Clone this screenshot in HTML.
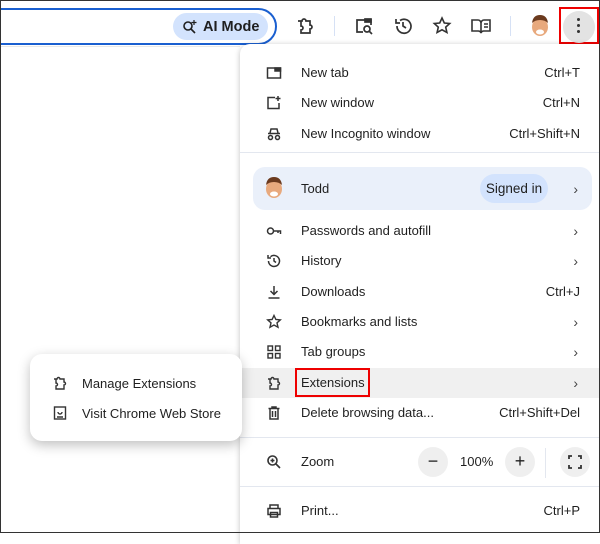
<!DOCTYPE html><html><head><style>
*{margin:0;padding:0;box-sizing:border-box}
body{width:600px;height:533px;overflow:hidden;background:#fff;font-family:"Liberation Sans",sans-serif;color:#1f1f1f;position:relative;font-size:13px}
.frame{position:absolute;inset:0;border:1px solid #333;z-index:50;pointer-events:none}
.omni{position:absolute;left:-20px;top:8px;width:297px;height:37px;border:2px solid #1a5fd0;border-radius:20px}
.ai{position:absolute;left:173px;top:13px;width:95px;height:27px;background:#d3e3fd;border-radius:14px;font-size:14.5px;font-weight:bold;color:#1f1f1f;padding:6px 0 0 30px}
.tb{position:absolute;top:46px;left:0;width:240px;height:1px;background:#e8e8e8}
.menu{position:absolute;left:240px;top:44px;width:360px;height:500px;background:#fff;border-radius:10px 0 0 0;box-shadow:0 1px 6px rgba(0,0,0,.25)}
.row{position:absolute;left:0;width:360px;height:30px;line-height:30px}
.row .t{position:absolute;left:61px}
.row .s{position:absolute;right:20px}
.row .ch{position:absolute;right:22px;font-size:14px;color:#444}
.ic{position:absolute;left:26px;top:7px;width:16px;height:16px}
.sep{position:absolute;left:0;width:360px;height:1px;background:#e3e7ef}
.sub{position:absolute;left:30px;top:354px;width:212px;height:87px;background:#fff;border-radius:12px;box-shadow:0 4px 12px rgba(0,0,0,.25);z-index:5}
.sub div{position:absolute;left:52px;font-size:13px}
.btn{position:absolute;width:30px;height:30px;border-radius:15px;background:#efefef;text-align:center;line-height:29px;font-size:18px}
</style></head><body>
<div class="frame"></div>
<div class="omni"></div>
<div class="ai"><svg style="position:absolute;left:9px;top:6px" width="16" height="16" viewBox="0 0 16 16" fill="none" stroke="#1f1f1f" stroke-width="1.6"><circle cx="6" cy="7" r="4"/><path d="M9 10l4 4"/><path d="M12 1v5M9.5 3.5h5" stroke-width="1.2"/></svg>AI Mode</div>
<svg style="position:absolute;left:295px;top:16px" width="20" height="20" viewBox="0 0 20 20" fill="none" stroke="#333" stroke-width="1.7"><path d="M3 5h4a2 2 0 014 0h4v4a2 2 0 010 4v4H6v-3a2 2 0 000-4V5"/></svg>
<div style="position:absolute;left:334px;top:16px;width:1px;height:20px;background:#d6e1f5"></div>
<svg style="position:absolute;left:354px;top:16px" width="20" height="20" viewBox="0 0 20 20" fill="none" stroke="#333" stroke-width="1.7"><path d="M9 16H3V4h14v5"/><rect x="11" y="3" width="6" height="3" fill="#333"/><circle cx="13" cy="13" r="3"/><path d="M15 15l3 3"/></svg>
<svg style="position:absolute;left:393px;top:16px" width="20" height="20" viewBox="0 0 20 20" fill="none" stroke="#333" stroke-width="1.7"><path d="M4 10a7 7 0 103-5.5M3 3v4h4"/><path d="M10 6v4l3 2"/></svg>
<svg style="position:absolute;left:432px;top:16px" width="20" height="20" viewBox="0 0 20 20" fill="none" stroke="#333" stroke-width="1.6"><path d="M10 2l2.3 5 5.4.5-4 3.7 1.2 5.3L10 13.8 5.1 16.5l1.2-5.3-4-3.7 5.4-.5z"/></svg>
<svg style="position:absolute;left:470px;top:16px" width="22" height="20" viewBox="0 0 22 20" fill="none" stroke="#333" stroke-width="1.6"><path d="M2 4h6a3 3 0 013 3v10a3 3 0 00-3-2H2zM20 4h-6a3 3 0 00-3 3v10a3 3 0 013-2h6z"/><path d="M14 8h4M14 11h4"/></svg>
<div style="position:absolute;left:510px;top:16px;width:1px;height:20px;background:#d6e1f5"></div>
<svg style="position:absolute;left:529px;top:14px" width="22" height="24" viewBox="0 0 22 24"><ellipse cx="11" cy="13" rx="8" ry="9" fill="#e8a97d"/><path d="M3 9q1-8 8-8t8 8q-3-3-8-3t-8 3z" fill="#6b3a1e"/><ellipse cx="11" cy="18" rx="4" ry="2.5" fill="#fff"/></svg>
<div style="position:absolute;left:559px;top:7px;width:40px;height:37px;border:2px solid #e00;"></div>
<div style="position:absolute;left:563px;top:11px;width:32px;height:32px;border-radius:16px;background:#e3e3e3"></div>
<div style="position:absolute;left:577px;top:18px;width:3px;height:3px;border-radius:2px;background:#333;box-shadow:0 6px 0 #333,0 12px 0 #333"></div>
<div class="tb"></div>

<div class="menu">
<div class="row" style="top:14px"><svg class="ic" viewBox="0 0 16 16" fill="none" stroke="#333" stroke-width="1.5"><rect x="1.5" y="3" width="13" height="10"/><rect x="9" y="3" width="5.5" height="3" fill="#333"/></svg><span class="t">New tab</span><span class="s">Ctrl+T</span></div>
<div class="row" style="top:44px"><svg class="ic" viewBox="0 0 16 16" fill="none" stroke="#333" stroke-width="1.5"><path d="M9 2.5H2v11h11V8M12 1v5M9.5 3.5h5"/></svg><span class="t">New window</span><span class="s">Ctrl+N</span></div>
<div class="row" style="top:75px"><svg class="ic" viewBox="0 0 16 16" fill="none" stroke="#333" stroke-width="1.5"><path d="M4 7l1-4h6l1 4M2 7.5h12"/><circle cx="4.5" cy="11.5" r="2"/><circle cx="11.5" cy="11.5" r="2"/></svg><span class="t">New Incognito window</span><span class="s">Ctrl+Shift+N</span></div>
<div class="sep" style="top:108px"></div>
<div style="position:absolute;left:13px;top:123px;width:339px;height:43px;background:#eaf0fa;border-radius:12px"></div>
<svg style="position:absolute;left:23px;top:132px" width="22" height="24" viewBox="0 0 22 24"><ellipse cx="11" cy="13" rx="8" ry="9" fill="#e8a97d"/><path d="M3 9q1-8 8-8t8 8q-3-3-8-3t-8 3z" fill="#6b3a1e"/><ellipse cx="11" cy="18" rx="4" ry="2.5" fill="#fff"/></svg>
<div class="row" style="top:130px"><span class="t">Todd</span><span class="ch">›</span></div>
<div style="position:absolute;left:240px;top:130px;width:68px;height:29px;border-radius:15px;background:#d3e3fd;line-height:29px;text-align:center;font-size:13.5px">Signed in</div>
<div class="row" style="top:172px"><svg class="ic" viewBox="0 0 16 16" fill="none" stroke="#333" stroke-width="1.5"><circle cx="4.5" cy="8" r="3"/><path d="M7.5 8h7v3M12 8v2"/></svg><span class="t">Passwords and autofill</span><span class="ch">›</span></div>
<div class="row" style="top:202px"><svg class="ic" viewBox="0 0 16 16" fill="none" stroke="#333" stroke-width="1.5"><path d="M2.5 8a5.5 5.5 0 102-4.3M2 2v3h3M8 5v3l2 1.5"/></svg><span class="t">History</span><span class="ch">›</span></div>
<div class="row" style="top:233px"><svg class="ic" viewBox="0 0 16 16" fill="none" stroke="#333" stroke-width="1.5"><path d="M8 2v8M4.5 7L8 10.5 11.5 7M2.5 14h11"/></svg><span class="t">Downloads</span><span class="s">Ctrl+J</span></div>
<div class="row" style="top:263px"><svg class="ic" viewBox="0 0 16 16" fill="none" stroke="#333" stroke-width="1.4"><path d="M8 1.5l1.9 4 4.4.4-3.3 3 1 4.3L8 11 4 13.2l1-4.3-3.3-3 4.4-.4z"/></svg><span class="t">Bookmarks and lists</span><span class="ch">›</span></div>
<div class="row" style="top:293px"><svg class="ic" viewBox="0 0 16 16" fill="none" stroke="#333" stroke-width="1.4"><rect x="2" y="2" width="4.5" height="4.5"/><rect x="9.5" y="2" width="4.5" height="4.5"/><rect x="2" y="9.5" width="4.5" height="4.5"/><rect x="9.5" y="9.5" width="4.5" height="4.5"/></svg><span class="t">Tab groups</span><span class="ch">›</span></div>
<div class="row" style="top:324px;background:#f0f0f0"><svg class="ic" viewBox="0 0 16 16" fill="none" stroke="#333" stroke-width="1.4"><path d="M2 4h3a1.5 1.5 0 013 0h4v3a1.5 1.5 0 010 3v4H4v-3a1.5 1.5 0 000-3V4"/></svg><span class="t">Extensions</span><span class="ch">›</span></div>
<div style="position:absolute;left:55px;top:324px;width:75px;height:29px;border:2px solid #e00"></div>
<div class="row" style="top:354px"><svg class="ic" viewBox="0 0 16 16" fill="none" stroke="#333" stroke-width="1.5"><path d="M2.5 3.5h11M6 3.5V2h4v1.5M4 3.5v10.5h8V3.5M6.5 6v6M9.5 6v6"/></svg><span class="t">Delete browsing data...</span><span class="s">Ctrl+Shift+Del</span></div>
<div class="sep" style="top:393px"></div>
<div class="row" style="top:403px;height:30px"><svg class="ic" viewBox="0 0 16 16" fill="none" stroke="#333" stroke-width="1.6"><circle cx="6.5" cy="6.5" r="4.5"/><path d="M10 10l4 4M6.5 4.5v4M4.5 6.5h4"/></svg><span class="t">Zoom</span></div>
<div class="btn" style="left:178px;top:403px">−</div>
<div style="position:absolute;left:220px;top:410px;font-size:13px">100%</div>
<div class="btn" style="left:265px;top:403px">+</div>
<div style="position:absolute;left:305px;top:404px;width:1px;height:30px;background:#e3e7ef"></div>
<div class="btn" style="left:320px;top:403px"><svg width="14" height="14" viewBox="0 0 14 14" fill="none" stroke="#333" stroke-width="1.8" style="margin-top:8px"><path d="M1 4V1h3M10 1h3v3M13 10v3h-3M4 13H1v-3"/></svg></div>
<div class="sep" style="top:442px"></div>
<div class="row" style="top:452px"><svg class="ic" viewBox="0 0 16 16" fill="none" stroke="#333" stroke-width="1.5"><path d="M4 5V2h8v3M2 5.5h12v6H2zM4.5 9.5h7v4.5h-7z"/></svg><span class="t">Print...</span><span class="s">Ctrl+P</span></div>
</div>

<div class="sub">
<svg style="position:absolute;left:22px;top:21px" width="16" height="16" viewBox="0 0 16 16" fill="none" stroke="#333" stroke-width="1.4"><path d="M2 4h3a1.5 1.5 0 013 0h4v3a1.5 1.5 0 010 3v4H4v-3a1.5 1.5 0 000-3V4"/></svg>
<div style="top:22px">Manage Extensions</div>
<svg style="position:absolute;left:22px;top:51px" width="16" height="16" viewBox="0 0 16 16" fill="none" stroke="#333" stroke-width="1.4"><rect x="2.5" y="2" width="11" height="12"/><path d="M6 7a2 2 0 004 0M5 12h6"/></svg>
<div style="top:52px">Visit Chrome Web Store</div>
</div>
</body></html>
